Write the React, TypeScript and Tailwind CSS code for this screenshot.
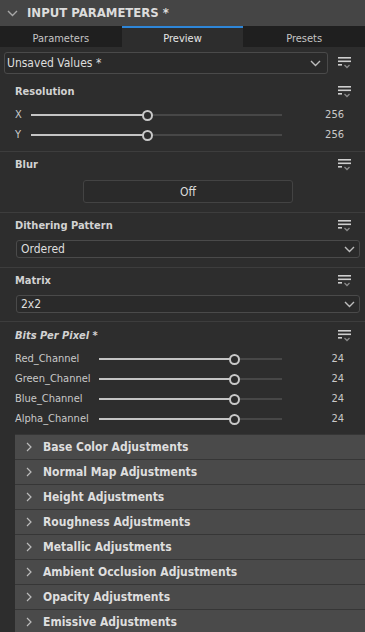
import React from "react";

const font = { fontFamily: '"DejaVu Sans Condensed", "DejaVu Sans", Tahoma, sans-serif' };

function MenuIcon() {
  return (
    <svg width="14" height="12" viewBox="0 0 14 12" className="shrink-0">
      <rect x="0" y="0" width="13" height="1.6" fill="#cfcfcf" />
      <rect x="0" y="3.5" width="13" height="1.6" fill="#cfcfcf" />
      <rect x="0" y="7" width="4" height="1.6" fill="#cfcfcf" />
      <path d="M6.5 8 L9 10.5 L11.5 8" stroke="#8a8a8a" strokeWidth="1.3" fill="none" />
    </svg>
  );
}

function Chevron({ dir = "down", color = "#bdbdbd" }: { dir?: "down" | "right"; color?: string }) {
  if (dir === "right")
    return (
      <svg width="8" height="10" viewBox="0 0 8 10">
        <path d="M2 1 L6 5 L2 9" stroke={color} strokeWidth="1.2" fill="none" />
      </svg>
    );
  return (
    <svg width="11" height="7" viewBox="0 0 11 7">
      <path d="M1 1 L5.5 5.5 L10 1" stroke={color} strokeWidth="1.4" fill="none" />
    </svg>
  );
}

function Slider({ pct }: { pct: number }) {
  return (
    <div className="relative flex-1 h-[20px] flex items-center">
      <div className="absolute left-0 right-0 h-[2px] bg-[#474747]" />
      <div className="absolute left-0 h-[2px] bg-[#c4c4c4]" style={{ width: `${pct}%` }} />
      <div
        className="absolute w-[11px] h-[11px] rounded-full border-[2px] border-[#c8c8c8] bg-[#2b2b2b]"
        style={{ left: `calc(${pct}% - 5.5px)` }}
      />
    </div>
  );
}

function SliderRow({ label, labelW, pct, value }: { label: string; labelW: string; pct: number; value: string }) {
  return (
    <div className="flex items-center h-[20px] mr-[8px] text-[11px] text-[#c9c9c9]">
      <div className={labelW}>{label}</div>
      <Slider pct={pct} />
      <div className="w-[62px] text-right">{value}</div>
    </div>
  );
}

function SectionHeader({ title, italic }: { title: string; italic?: boolean }) {
  return (
    <div className="flex items-center justify-between h-[14px]">
      <span className={"text-[11px] font-bold text-[#d2d2d2] " + (italic ? "italic" : "")}>{title}</span>
      <MenuIcon />
    </div>
  );
}

function Select({ value, className }: { value: string; className?: string }) {
  return (
    <div
      className={
        "flex items-center justify-between border border-[#4a4a4a] rounded-[3px] bg-[#2a2a2a] text-[12px] text-[#dedede] " +
        (className ?? "")
      }
    >
      <span>{value}</span>
      <Chevron />
    </div>
  );
}

const accordion = [
  "Base Color Adjustments",
  "Normal Map Adjustments",
  "Height Adjustments",
  "Roughness Adjustments",
  "Metallic Adjustments",
  "Ambient Occlusion Adjustments",
  "Opacity Adjustments",
  "Emissive Adjustments",
];

export default function App() {
  return (
    <div className="w-[365px] h-[632px] overflow-hidden bg-[#2d2d2d]" style={font}>
      {/* Header */}
      <div className="h-[26px] bg-[#454545] flex items-center">
        <div className="w-[25px] flex justify-center">
          <Chevron color="#a8a8a8" />
        </div>
        <span className="ml-[2px] text-[13px] font-bold text-[#dcdcdc]">INPUT PARAMETERS *</span>
      </div>
      {/* Tabs */}
      <div className="grid grid-cols-3 h-[21px] bg-[#1f1f1f] text-[11px]">
        <div className="flex items-center justify-center pt-[3px] border-t-2 border-transparent text-[#c4c4c4]">Parameters</div>
        <div className="flex items-center justify-center pt-[3px] text-[#e6e6e6] bg-[#2d2d2d] border-t-2 border-[#2e86d8]">Preview</div>
        <div className="flex items-center justify-center pt-[3px] border-t-2 border-transparent text-[#c4c4c4]">Presets</div>
      </div>
      {/* Preset select */}
      <div className="flex items-center pt-[5px] pl-[4px] pr-[13px]">
        <Select value="Unsaved Values *" className="w-[324px] h-[22px] pl-[2px] pr-[6px]" />
        <div className="flex-1 flex justify-end">
          <MenuIcon />
        </div>
      </div>
      {/* Resolution */}
      <div className="pl-[15px] pr-[13px] pt-[11px] pb-[6px]">
        <SectionHeader title="Resolution" />
        <div className="mt-[6px]">
          <SliderRow label="X" labelW="w-[16px]" pct={46.6} value="256" />
          <SliderRow label="Y" labelW="w-[16px]" pct={46.6} value="256" />
        </div>
      </div>
      {/* Blur */}
      <div className="border-t border-[#3d3d3d] pl-[15px] pr-[13px] pt-[6px] pb-[9px]">
        <SectionHeader title="Blur" />
        <div className="mt-[8px] flex">
          <div className="ml-[68px] w-[210px] h-[23px] flex items-center justify-center border border-[#434343] rounded-[3px] bg-[#2a2a2a] text-[12px] text-[#dcdcdc]">
            Off
          </div>
        </div>
      </div>
      {/* Dithering */}
      <div className="border-t border-[#3d3d3d] pl-[15px] pr-[13px] pt-[6px] pb-[9px]">
        <SectionHeader title="Dithering Pattern" />
        <Select value="Ordered" className="mt-[7px] mr-[-8px] ml-[1px] h-[18px] pl-[4px] pr-[4px]" />
      </div>
      {/* Matrix */}
      <div className="border-t border-[#3d3d3d] pl-[15px] pr-[13px] pt-[6px] pb-[8px]">
        <SectionHeader title="Matrix" />
        <Select value="2x2" className="mt-[7px] mr-[-8px] ml-[1px] h-[18px] pl-[4px] pr-[4px]" />
      </div>
      {/* Bits */}
      <div className="border-t border-[#3d3d3d] pl-[15px] pr-[13px] pt-[7px] pb-[5px]">
        <SectionHeader title="Bits Per Pixel *" italic />
        <div className="mt-[6px]">
          <SliderRow label="Red_Channel" labelW="w-[84px]" pct={74.3} value="24" />
          <SliderRow label="Green_Channel" labelW="w-[84px]" pct={74.3} value="24" />
          <SliderRow label="Blue_Channel" labelW="w-[84px]" pct={74.3} value="24" />
          <SliderRow label="Alpha_Channel" labelW="w-[84px]" pct={74.3} value="24" />
        </div>
      </div>
      {/* Accordion */}
      <div className="ml-[15px]">
        {accordion.map((t) => (
          <div key={t} className="h-[25px] flex items-center bg-[#4a4a4a] border-t border-[#363636]">
            <div className="w-[28px] flex justify-center">
              <Chevron dir="right" color="#bcbcbc" />
            </div>
            <span className="text-[12px] font-bold text-[#dedede]">{t}</span>
          </div>
        ))}
      </div>
    </div>
  );
}
